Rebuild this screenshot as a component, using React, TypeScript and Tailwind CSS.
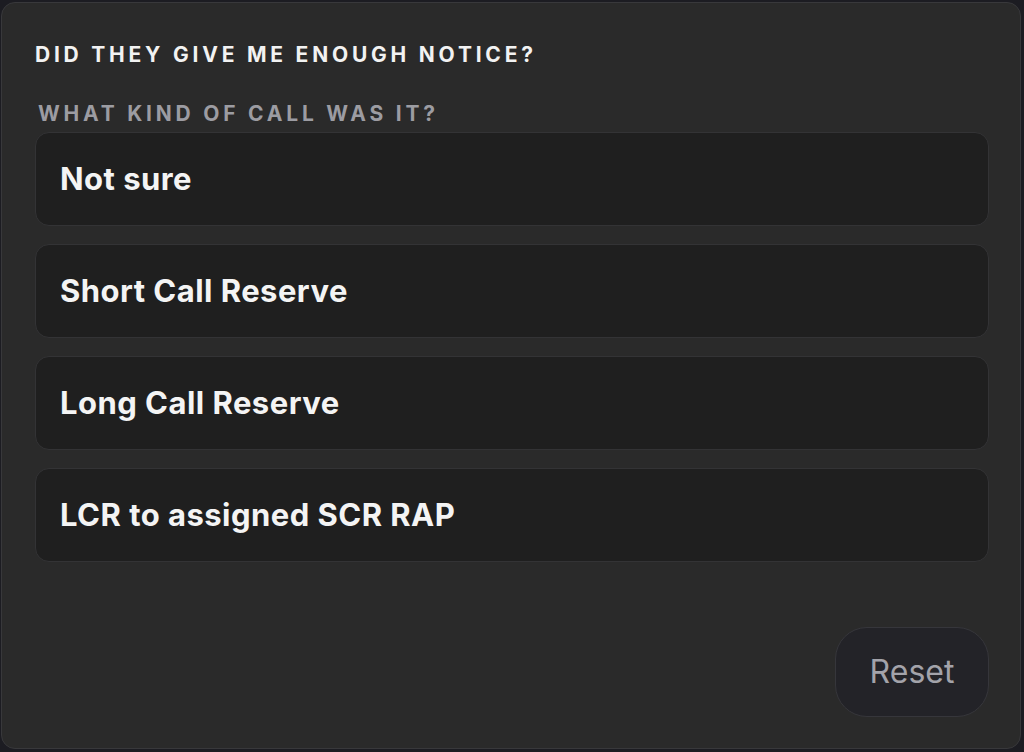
export default function App() {
  const options = ["Not sure", "Short Call Reserve", "Long Call Reserve", "LCR to assigned SCR RAP"];

  return (
    <div className="w-[1024px] h-[752px] bg-[#1c1c22] pt-[2px] pl-[1px] font-['Inter',sans-serif]">
      <div className="w-[1020px] h-[747px] rounded-[14px] border border-[#38383b] bg-[#2a2a2a] pl-[33px] pr-[31px] pt-[38px] flex flex-col">
        <h1 className="text-[21px] leading-[28px] font-bold tracking-[0.18em] text-[#f2f2f2]">
          DID THEY GIVE ME ENOUGH NOTICE?
        </h1>
        <h2 className="mt-[32px] pl-[3px] text-[21px] leading-[26px] font-bold tracking-[0.18em] text-[#9c9ca2]">
          WHAT KIND OF CALL WAS IT?
        </h2>
        <div className="mt-[5px] flex flex-col gap-[18px]">
          {options.map((o) => (
            <button
              key={o}
              className="h-[94px] w-full rounded-[14px] border border-[#333335] bg-[#1f1f1f] pl-[24px] text-left text-[31px] font-bold tracking-[0.015em] text-[#f4f4f4]"
            >
              {o}
            </button>
          ))}
        </div>
        <div className="mt-auto mb-[31px] flex justify-end">
          <button className="h-[90px] w-[154px] rounded-[32px] border border-[#36363b] bg-[#232328] text-[32px] text-[#a3a3aa]">
            Reset
          </button>
        </div>
      </div>
    </div>
  );
}
